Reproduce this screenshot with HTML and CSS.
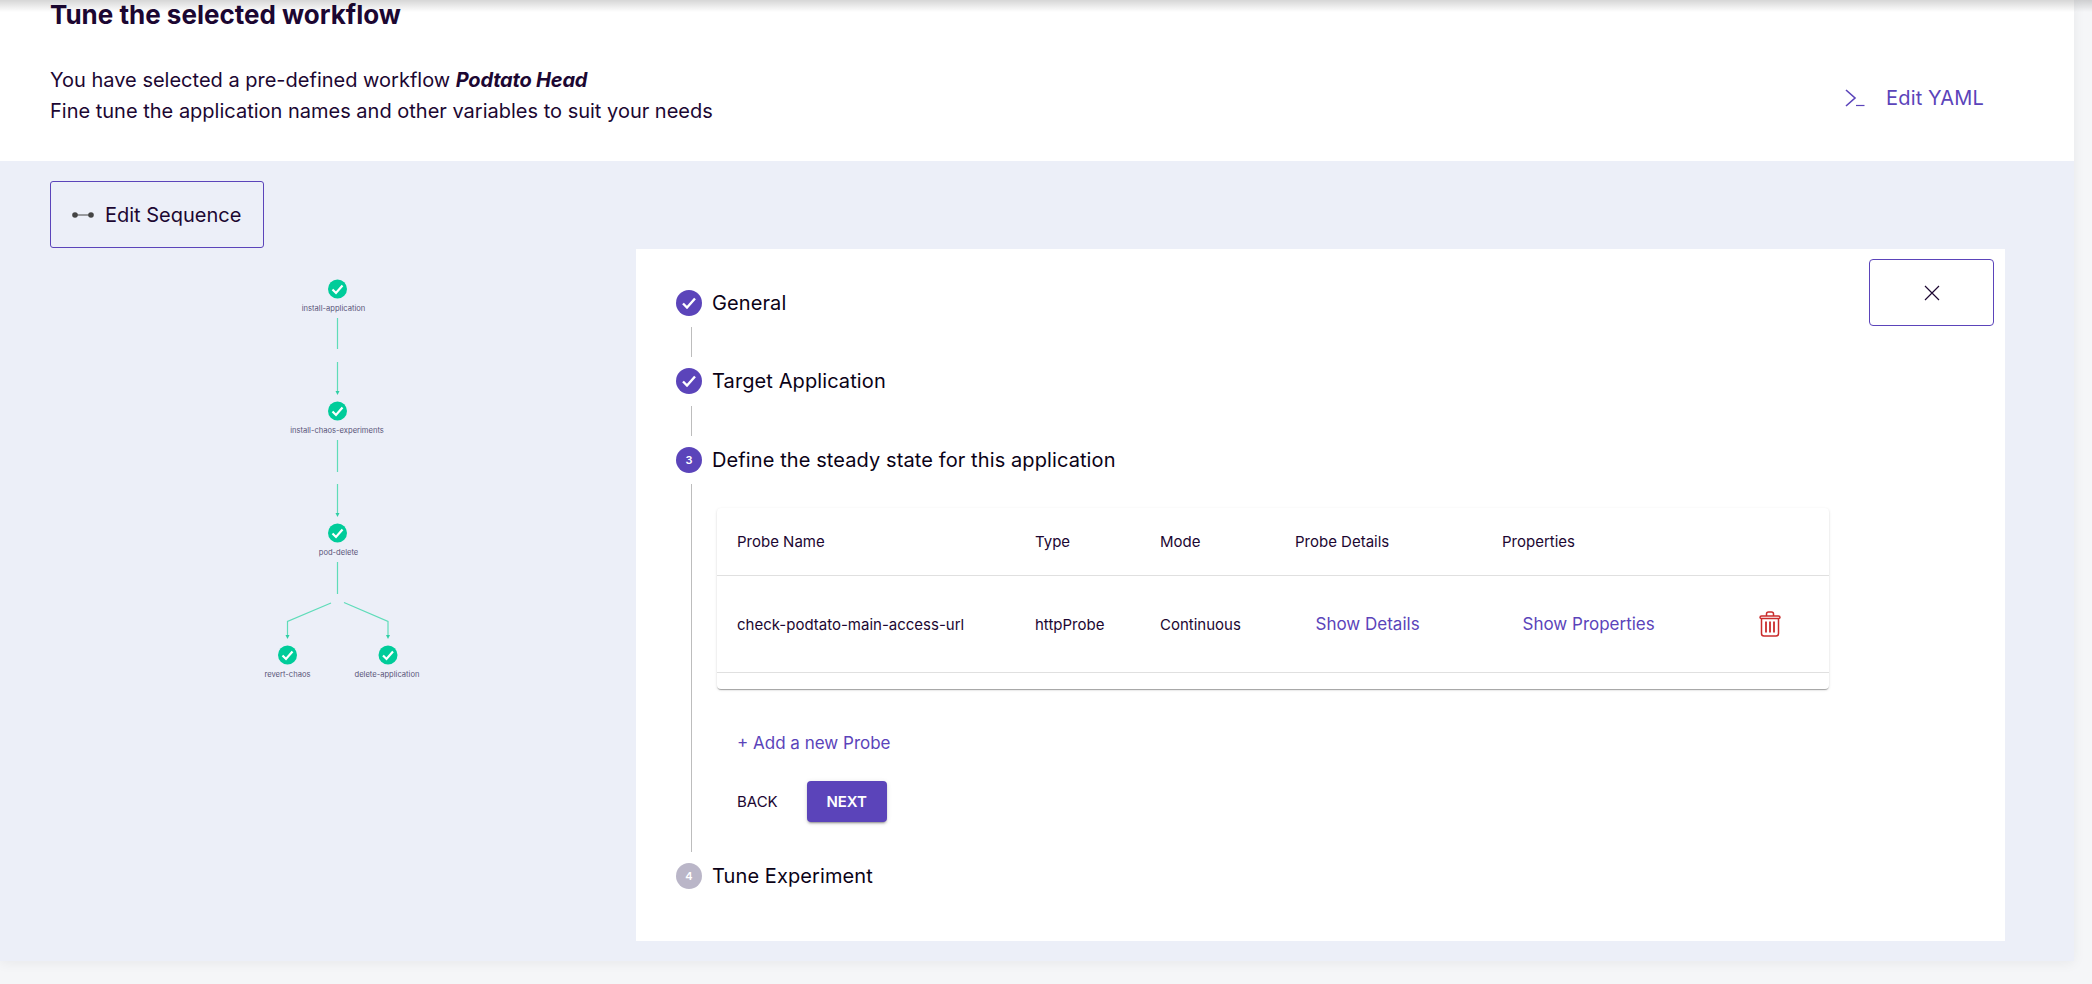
FILE: index.html
```html
<!DOCTYPE html>
<html lang="en">
<head>
    <meta charset="UTF-8">
    <meta name="viewport" content="width=device-width, initial-scale=1.0">
    <title>Tune the selected workflow</title>
    <link rel="stylesheet" href="styles.css">
</head>
<body>
    <div class="top-shadow"></div>
    <div class="page-card">
        <div class="header">
            <div class="header-text">
                <h1>Tune the selected workflow</h1>
                <p>You have selected a pre-defined workflow <strong>Podtato Head</strong></p>
                <p>Fine tune the application names and other variables to suit your needs</p>
            </div>
            <div class="yaml-link">
                <svg class="yaml-icon" width="20" height="18" viewBox="0 0 20 18">
                    <path d="M1 1 L10 9 L1 17" fill="none" stroke="#5b44ba" stroke-width="1.6"/>
                    <path d="M11 16.5 H19.5" fill="none" stroke="#5b44ba" stroke-width="1.2"/>
                </svg>
                <span>Edit YAML</span>
            </div>
        </div>

        <div class="workspace">
            <div class="graph-column">
                <div class="sequence-btn">
                    <svg width="22" height="8" viewBox="0 0 22 8">
                        <circle cx="3" cy="4" r="2.8" fill="#444"/>
                        <path d="M3 4 H19" stroke="#444" stroke-width="1"/>
                        <circle cx="19" cy="4" r="2.8" fill="#444"/>
                    </svg>
                    <span>Edit Sequence</span>
                </div>
                <!-- viewBox uses the page coordinates of the graph area -->
                <svg class="graph" width="586" height="692" viewBox="50 249 586 692">
                    <g class="edges">
                        <path d="M337.5 318 V349"/>
                        <path d="M337.5 362 V392"/>
                        <path d="M337.5 440 V472"/>
                        <path d="M337.5 484 V514"/>
                        <path d="M337.5 562 V594"/>
                        <path d="M331 603 L287.5 621.5 V636"/>
                        <path d="M344 602.500 L388 621.500 V636"/>
                    </g>
                    <g class="arrows">
                        <path d="M335.500 391 H339.500 L337.500 395 Z"/>
                        <path d="M335.500 513 H339.500 L337.500 517 Z"/>
                        <path d="M285.500 635 H289.500 L287.500 639 Z"/>
                        <path d="M386 635 H390 L388 639 Z"/>
                    </g>
                    <g class="nodes">
                        <circle cx="337.500" cy="289" r="9.500"/>
                        <circle cx="337.500" cy="411" r="9.500"/>
                        <circle cx="337.500" cy="533" r="9.500"/>
                        <circle cx="287.500" cy="655" r="9.500"/>
                        <circle cx="388" cy="655" r="9.500"/>
                    </g>
                    <g class="ticks">
                        <path d="M332.500 289.500 L336 293 L342.500 285.500"/>
                        <path d="M332.500 411.500 L336 415 L342.500 407.500"/>
                        <path d="M332.500 533.500 L336 537 L342.500 529.500"/>
                        <path d="M282.500 655.500 L286 659 L292.500 651.500"/>
                        <path d="M383 655.500 L386.500 659 L393 651.500"/>
                    </g>
                    <g class="labels">
                        <text x="333.500" y="311">install-application</text>
                        <text x="337" y="433">install-chaos-experiments</text>
                        <text x="338.500" y="555">pod-delete</text>
                        <text x="287.500" y="677">revert-chaos</text>
                        <text x="387" y="677">delete-application</text>
                    </g>
                </svg>
            </div>

            <div class="panel">
                <div class="close-btn">
                    <svg width="16" height="16" viewBox="0 0 16 16">
                        <path d="M1 1 L15 15 M15 1 L1 15" stroke="#1c0732" stroke-width="1.2"/>
                    </svg>
                </div>

                <div class="step">
                    <div class="step-circle">
                        <svg width="14" height="12" viewBox="0 0 14 12"><path d="M1 6.500 L5 10.500 L13 1.500" fill="none" stroke="#fff" stroke-width="2.400"/></svg>
                    </div>
                    <span class="step-title">General</span>
                </div>
                <div class="connector"></div>
                <div class="step">
                    <div class="step-circle">
                        <svg width="14" height="12" viewBox="0 0 14 12"><path d="M1 6.500 L5 10.500 L13 1.500" fill="none" stroke="#fff" stroke-width="2.400"/></svg>
                    </div>
                    <span class="step-title">Target Application</span>
                </div>
                <div class="connector connector-low"></div>
                <div class="step">
                    <div class="step-circle">3</div>
                    <span class="step-title">Define the steady state for this application</span>
                </div>

                <div class="step-content">
                    <div class="probe-table">
                        <div class="table-row table-head">
                            <span>Probe Name</span>
                            <span>Type</span>
                            <span>Mode</span>
                            <span>Probe Details</span>
                            <span>Properties</span>
                            <span></span>
                        </div>
                        <div class="table-row table-body">
                            <span>check-podtato-main-access-url</span>
                            <span>httpProbe</span>
                            <span>Continuous</span>
                            <span class="table-link">Show Details</span>
                            <span class="table-link">Show Properties</span>
                            <svg width="22" height="26" viewBox="0 0 22 26" fill="none" stroke="#ca2c2c">
                                <path d="M1 6.500 Q1 5 2.500 5 H19.500 Q21 5 21 6.500 Q21 7.500 19.500 7.500 H2.500 Q1 7.500 1 6.500 Z" stroke-width="1.500"/>
                                <path d="M7.500 5 V3 Q7.500 1 9.500 1 H12.500 Q14.500 1 14.500 3 V5" stroke-width="1.500"/>
                                <path d="M2.500 7.500 V22.500 Q2.500 25 5 25 H17 Q19.500 25 19.500 22.500 V7.500" stroke-width="1.500"/>
                                <path d="M7 10.500 V21.500 M11 10.500 V21.500 M15 10.500 V21.500" stroke-width="1.800"/>
                            </svg>
                        </div>
                    </div>
                    <div class="add-probe">+ Add a new Probe</div>
                    <div class="step-actions">
                        <span class="back-btn">BACK</span>
                        <span class="next-btn">NEXT</span>
                    </div>
                </div>

                <div class="step">
                    <div class="step-circle step-circle-off">4</div>
                    <span class="step-title">Tune Experiment</span>
                </div>
            </div>
        </div>
    </div>
</body>
</html>
```

FILE: styles.css
```css
body {
    margin: 0;
    height: 984px;
    overflow: hidden;
    background-color: #f5f6f8;
    color: #1c0732;
    font-family: Inter, "Noto Sans", sans-serif;
}

.top-shadow {
    position: absolute;
    top: 0;
    left: 0;
    width: 100%;
    height: 12px;
    background: linear-gradient(to bottom, rgba(0, 0, 0, 0.16), rgba(0, 0, 0, 0));
}

.page-card {
    width: 2074px;
    height: 961px;
    box-shadow: 0 2px 12px rgba(0, 0, 0, 0.06);
}

.header {
    height: 161px;
    box-sizing: border-box;
    background-color: #fff;
    padding-left: 50px;
    display: flex;
    justify-content: space-between;
}

.header h1 {
    margin: 0 0 35px;
    font-size: 26px;
    line-height: 30px;
    font-weight: 700;
}

.header p {
    margin: 0;
    font-size: 20px;
    line-height: 31px;
}

.header strong {
    font-style: italic;
    font-weight: 700;
    letter-spacing: -0.2px;
}

.yaml-link {
    display: flex;
    align-items: center;
    gap: 21px;
    height: 36px;
    margin-top: 80px;
    margin-right: 90px;
    color: #5b44ba;
    font-size: 20px;
    letter-spacing: 0.15px;
}

.workspace {
    height: 800px;
    box-sizing: border-box;
    background-color: #eceff8;
    padding: 20px 0 20px 50px;
    display: flex;
}

.graph-column {
    width: 586px;
}

.sequence-btn {
    width: 214px;
    height: 67px;
    box-sizing: border-box;
    border: 1px solid #5b44ba;
    border-radius: 3px;
    display: flex;
    align-items: center;
    gap: 11px;
    padding-left: 21px;
    font-size: 20px;
    margin-bottom: 1px;
}

.graph {
    display: block;
}

.edges path {
    fill: none;
    stroke: #5fdcb9;
    stroke-width: 1.2;
}

.arrows path {
    fill: #2fcfa5;
}

.nodes circle {
    fill: #00cc9a;
}

.ticks path {
    fill: none;
    stroke: #fff;
    stroke-width: 2.2;
}

.labels text {
    font-size: 7.600px;
    fill: #5a5578;
    text-anchor: middle;
}

.panel {
    position: relative;
    width: 1369px;
    height: 692px;
    box-sizing: border-box;
    margin-top: 68px;
    background-color: #fff;
    padding: 41px 0 0 40px;
}

.close-btn {
    position: absolute;
    top: 10px;
    right: 11px;
    width: 125px;
    height: 67px;
    box-sizing: border-box;
    border: 1px solid #5b44ba;
    border-radius: 4px;
    display: flex;
    align-items: center;
    justify-content: center;
}

.step {
    display: flex;
    align-items: center;
    gap: 10px;
    height: 26px;
}

.step-circle {
    width: 26px;
    height: 26px;
    border-radius: 50%;
    background-color: #5b44ba;
    color: #fff;
    font-size: 11px;
    font-weight: 600;
    display: flex;
    align-items: center;
    justify-content: center;
}

.step-circle-off {
    background-color: #bab6c8;
}

.step-title {
    font-size: 20px;
    letter-spacing: 0.1px;
    color: #0b0217;
}

.connector {
    height: 30px;
    margin: 11px 0 11px 15px;
    border-left: 1px solid #bdbdbd;
}

.connector-low {
    margin-top: 12px;
}

.step-content {
    height: 368px;
    box-sizing: border-box;
    margin: 11px 0 11px 15px;
    border-left: 1px solid #bdbdbd;
    padding: 24px 0 0 25px;
}

.probe-table {
    width: 1112px;
    height: 181px;
    background-color: #fff;
    border-radius: 4px;
    box-shadow: 0 2px 1px -1px rgba(0, 0, 0, 0.2), 0 1px 1px rgba(0, 0, 0, 0.14), 0 1px 3px rgba(0, 0, 0, 0.12);
}

.table-row {
    display: grid;
    grid-template-columns: 298px 125px 135px 207px 257px auto;
    align-items: center;
    padding-left: 20px;
    font-size: 15px;
}

.table-head {
    height: 67px;
}

.table-body {
    height: 98px;
    box-sizing: border-box;
    border-top: 1px solid #e0e0e0;
    border-bottom: 1px solid #e0e0e0;
}

.table-link {
    padding-left: 20.500px;
    color: #5b44ba;
    font-size: 17px;
}

.add-probe {
    margin: 42px 0 0 20px;
    height: 24px;
    line-height: 24px;
    font-size: 17px;
    color: #5b44ba;
}

.step-actions {
    display: flex;
    align-items: center;
    gap: 29px;
    margin: 26px 0 0 20px;
}

.back-btn {
    font-size: 15px;
}

.next-btn {
    width: 80px;
    height: 41px;
    border-radius: 4px;
    background-color: #5b44ba;
    color: #fff;
    font-size: 15px;
    font-weight: 600;
    display: flex;
    align-items: center;
    justify-content: center;
    box-shadow: 0 3px 1px -2px rgba(0, 0, 0, 0.2), 0 2px 2px rgba(0, 0, 0, 0.14), 0 1px 5px rgba(0, 0, 0, 0.12);
}
```
